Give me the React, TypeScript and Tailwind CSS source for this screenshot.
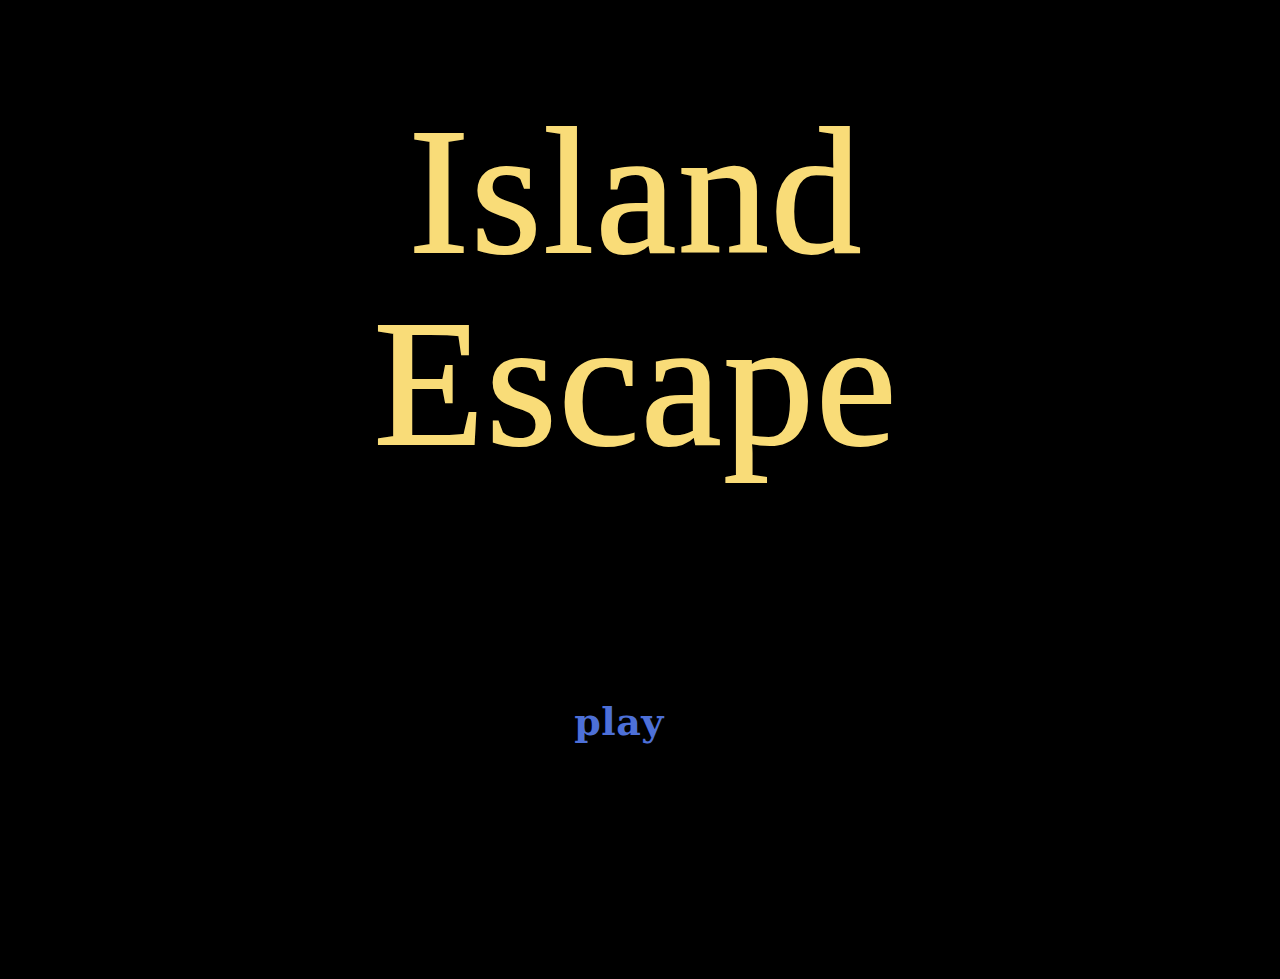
export default function App() {
  return (
    <div className="min-h-screen w-full bg-black flex flex-col items-center">
      <h1 className="mt-[95px] mr-[8px] text-center font-['Liberation_Serif',serif] text-[181px] leading-[192px] tracking-[2px] text-[#f9dc78] font-normal [-webkit-text-stroke:2px_#f9dc78]">
        Island
        <br />
        Escape
      </h1>
      <button className="mt-[224px] mr-[42px] font-['DejaVu_Serif',serif] text-[38px] leading-[38px] tracking-[0.5px] font-bold text-[#4d70d8]">
        play
      </button>
    </div>
  )
}
